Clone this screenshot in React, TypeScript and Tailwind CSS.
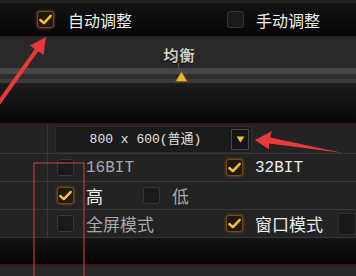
import clsx from "clsx";

const Box = ({ on }: { on?: boolean }) => (
  <span
    className={clsx(
      "w-[17px] h-[17px] rounded-[3px] flex items-center justify-center shrink-0",
      on
        ? "bg-[#24170b] border border-[#6e4a1c] shadow-[0_0_3px_#8a5a18]"
        : "bg-[#1a1a1a] border border-[#383838]"
    )}
  >
    {on && (
      <svg viewBox="0 0 16 16" className="w-[15px] h-[15px]">
        <path
          d="M2.5 8.5 L6.3 11.8 L13.6 4.2"
          fill="none"
          stroke="#f4c53a"
          strokeWidth="2.6"
          strokeLinecap="round"
          strokeLinejoin="round"
        />
      </svg>
    )}
  </span>
);

type OptProps = { on?: boolean; label: string; mono?: boolean; w?: string };
const Opt = ({ on, label, mono, w }: OptProps) => (
  <div className={clsx("flex items-center gap-[12px]", w)}>
    <Box on={on} />
    <span
      className={clsx(
        "leading-none whitespace-nowrap",
        mono ? "font-['Liberation_Mono',monospace] text-[16px]" : "text-[17px]",
        on ? "text-[#ececec]" : "text-[#a8a8a8]"
      )}
    >
      {label}
    </span>
  </div>
);

const Row = ({ children, h = "h-[28px]" }: { children?: React.ReactNode; h?: string }) => (
  <div className={clsx("flex border-b border-[#383838]", h)}>
    <div className="w-[48px] border-r border-[#383838] shrink-0" />
    <div className="flex-1 flex items-center pl-[9px]">{children}</div>
  </div>
);

export default function App() {
  return (
    <div className="relative w-[356px] h-[276px] overflow-hidden bg-[#0c0c0c] text-[#e8e8e8] font-['Noto_Sans_CJK_SC',sans-serif]">
      {/* mode row */}
      <div className="h-[37px] border-t-[3px] border-t-[#242424] border-b border-b-[#3c1818] bg-gradient-to-b from-[#141414] to-[#060606] flex items-center pl-[37px]">
        <div className="flex items-center gap-[14px] w-[190px]">
          <Box on />
          <span className="text-[16px] leading-none text-[#eeeeee]">自动调整</span>
        </div>
        <div className="flex items-center gap-[12px]">
          <Box />
          <span className="text-[16px] leading-none text-[#eeeeee]">手动调整</span>
        </div>
      </div>

      {/* quality label + slider */}
      <div className="h-[31px] bg-[#292929] flex flex-col items-center justify-end">
        <span className="text-[15px] font-bold leading-none text-[#d6cfc2] [text-shadow:0_1px_1px_#000] tracking-[1px] pl-[3px]">
          均衡
        </span>
        <span className="w-px h-[5px] bg-[#555] mt-[1px]" />
      </div>
      <div className="relative">
        <div className="h-[6px] bg-[#474747]" />
        <div className="h-[5px] bg-[#2c2c2c]" />
        <div className="h-[4px] bg-[#3c3c3c]" />
        <svg viewBox="0 0 14 12" className="absolute left-[175px] top-[3px] w-[13px] h-[11px]">
          <path d="M7 0.5 L13.5 11.5 L0.5 11.5 Z" fill="#f0b429" stroke="#7a5410" strokeWidth="0.8" />
        </svg>
      </div>
      <div className="h-[42px] bg-gradient-to-b from-[#1d1d1d] via-[#121212] to-[#070707] border-b-2 border-[#3a1616]" />

      {/* settings rows */}
      <div className="bg-[#232323]">
        <Row h="h-[29px]">
          <div className="w-[197px] h-[27px] -ml-[2px] bg-[#1b1b1b] border border-[#2c2c2c] flex items-center">
            <span className="flex-1 text-center pl-[4px] font-['Liberation_Mono','Noto_Sans_CJK_SC',monospace] text-[13px] text-[#e2e2e2] leading-none">
              800 x 600(普通)
            </span>
            <span className="w-[18px] h-[21px] mr-[2px] bg-[#141414] border border-[#474747] flex items-center justify-center">
              <svg viewBox="0 0 10 8" className="w-[9px] h-[7px]">
                <path d="M0.5 0.5 L9.5 0.5 L5 7.5 Z" fill="#f3c43c" />
              </svg>
            </span>
          </div>
        </Row>
        <Row>
          <Opt label="16BIT" mono w="w-[169px]" />
          <Opt on label="32BIT" mono />
        </Row>
        <Row>
          <Opt on label="高" w="w-[86px]" />
          <Opt label="低" />
        </Row>
        <Row>
          <Opt label="全屏模式" w="w-[169px]" />
          <Opt on label="窗口模式" w="w-[112px]" />
          <div className="flex-1 h-[22px] bg-[#181818] border border-[#2e2e2e]" />
        </Row>
      </div>
      <div className="h-[28px] bg-gradient-to-b from-[#141414] to-[#050505] border-b-2 border-[#3a1616]" />
      <div className="h-[10px] bg-[#282828]" />

      {/* red annotations */}
      <svg className="absolute inset-0 pointer-events-none" width="356" height="276" viewBox="0 0 356 276">
        <line x1="-2" y1="104" x2="38" y2="48" stroke="#e8383a" strokeWidth="4" />
        <path d="M46 37 L43.5 55 L30 45.5 Z" fill="#e8383a" />
        <path d="M255 140 L272 131 L270 137.5 L343 153 L269 143.5 L269 149.5 Z" fill="#ea3a3c" />
        <rect x="34" y="163" width="50" height="130" fill="none" stroke="#b03a3e" strokeWidth="1.3" />
      </svg>
    </div>
  );
}
